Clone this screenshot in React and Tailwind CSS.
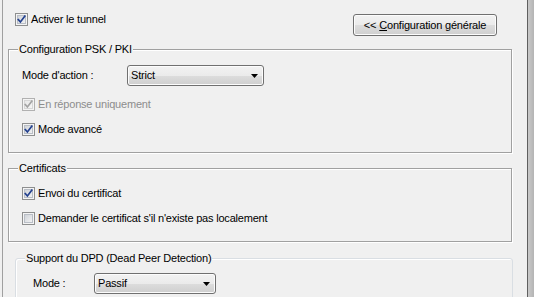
import React, { useId } from "react";

function CheckBox({ checked, disabled }) {
  const id = useId().replace(/:/g, "");
  const border = disabled ? "#b1b1b1" : "#8e8f8f";
  const check = disabled ? "#a3a3a3" : "#23418f";
  return (
    <svg width="13" height="13" viewBox="0 0 13 13" className="shrink-0">
      <defs>
        <linearGradient id={`g${id}`} x1="0" y1="0" x2="1" y2="1">
          <stop offset="0" stopColor={disabled ? "#e6e6e6" : "#cbcfd5"} />
          <stop offset="1" stopColor={disabled ? "#f7f7f7" : "#f6f6f6"} />
        </linearGradient>
      </defs>
      <rect x="0.5" y="0.5" width="12" height="12" fill="#f4f4f4" stroke={border} />
      <rect x="2" y="2" width="9" height="9" fill={`url(#g${id})`} />
      <rect x="2.5" y="2.5" width="8" height="8" fill="none" stroke={disabled ? "#d6d6d6" : "#b9bec6"} />
      {checked && (
        <path d="M3.3 6.6 L5.4 9 L9.8 3.2" fill="none" stroke={check} strokeWidth="1.7" strokeLinecap="square" />
      )}
    </svg>
  );
}

function Check({ checked, disabled, children, className = "" }) {
  return (
    <div className={`flex items-center gap-[3px] h-[13px] ${className}`}>
      <CheckBox checked={checked} disabled={disabled} />
      <span className={`leading-[13px] ${disabled ? "text-[#8d8d8d]" : "text-black"}`}>{children}</span>
    </div>
  );
}

function Combo({ value, w }) {
  return (
    <div
      className={`${w} h-[21px] rounded-[3px] border border-[#707070] flex items-center pl-[3px] pr-[5px] justify-between bg-[linear-gradient(to_bottom,#f2f2f2_0%,#ebebeb_50%,#dddddd_50%,#cfcfcf_100%)] shadow-[inset_0_0_0_1px_#fcfcfc]`}
    >
      <span className="leading-[13px]">{value}</span>
      <svg width="7" height="4" viewBox="0 0 7 4">
        <path d="M0 0 H7 L3.5 4 Z" fill="#000" />
      </svg>
    </div>
  );
}

function Group({ label, className = "", labelClass = "", children, light }) {
  return (
    <div
      className={`relative shrink-0 ${
        light
          ? "border border-[#d9dee3] rounded-[3px] shadow-[inset_1px_1px_0_#ffffff]"
          : "border border-[#a0a0a0] shadow-[inset_1px_1px_0_#ffffff,1px_1px_0_#ffffff]"
      } ${className}`}
    >
      <span className={`absolute -top-[7px] bg-[#f0f0f0] px-[1px] leading-[13px] ${labelClass}`}>{label}</span>
      {children}
    </div>
  );
}

export default function App() {
  return (
    <div className="w-[534px] h-[297px] overflow-hidden bg-[#f0f0f0] flex font-['Liberation_Sans',Arial,sans-serif] text-[11px] tracking-[-0.2px] text-black">
      <div className="w-[2px] shrink-0 bg-[#f0f0f0]" />
      <div className="w-[525px] shrink-0 border-l border-[#a0a0a0] flex flex-col">
        {/* top row */}
        <div className="flex justify-between items-start pt-[13px] pl-[12px] pr-[30px] shrink-0">
          <Check checked>Activer le tunnel</Check>
          <button className="mt-[1px] w-[144px] h-[22px] rounded-[3px] border border-[#707070] bg-[linear-gradient(to_bottom,#f2f2f2_0%,#ebebeb_50%,#dddddd_50%,#cfcfcf_100%)] shadow-[inset_0_0_0_1px_#fcfcfc] flex items-center justify-center leading-[13px]">
            &lt;&lt; <span className="underline underline-offset-[1px] ml-[3px]">C</span>onfiguration générale
          </button>
        </div>

        {/* Group 1 */}
        <Group label="Configuration PSK / PKI" className="mt-[13px] ml-[5px] w-[504px] h-[104px]" labelClass="left-[9px]">
          <div className="flex flex-col pl-[13px] pt-[15px]">
            <div className="flex items-center h-[21px]">
              <span className="w-[105px] leading-[13px]">Mode d'action :</span>
              <Combo value="Strict" w="w-[137px]" />
            </div>
            <Check disabled checked className="mt-[12px]">En réponse uniquement</Check>
            <Check checked className="mt-[12px]">Mode avancé</Check>
          </div>
        </Group>

        {/* Group 2 */}
        <Group label="Certificats" className="mt-[15px] ml-[5px] w-[504px] h-[74px]" labelClass="left-[9px]">
          <div className="flex flex-col pl-[13px] pt-[18px]">
            <Check checked>Envoi du certificat</Check>
            <Check className="mt-[12px]">Demander le certificat s'il n'existe pas localement</Check>
          </div>
        </Group>

        {/* Group 3 */}
        <Group light label="Support du DPD (Dead Peer Detection)" className="mt-[16px] ml-[12px] w-[498px] h-[80px]" labelClass="left-[9px]">
          <div className="flex items-center pl-[17px] pt-[14px]">
            <span className="w-[61px] leading-[13px]">Mode :</span>
            <Combo value="Passif" w="w-[122px]" />
          </div>
        </Group>
      </div>
      <div className="w-[1px] shrink-0 bg-[#5f5f5f]" />
      <div className="w-[6px] shrink-0 bg-[linear-gradient(to_right,#c9c9c9,#b4b4b4)]" />
    </div>
  );
}
